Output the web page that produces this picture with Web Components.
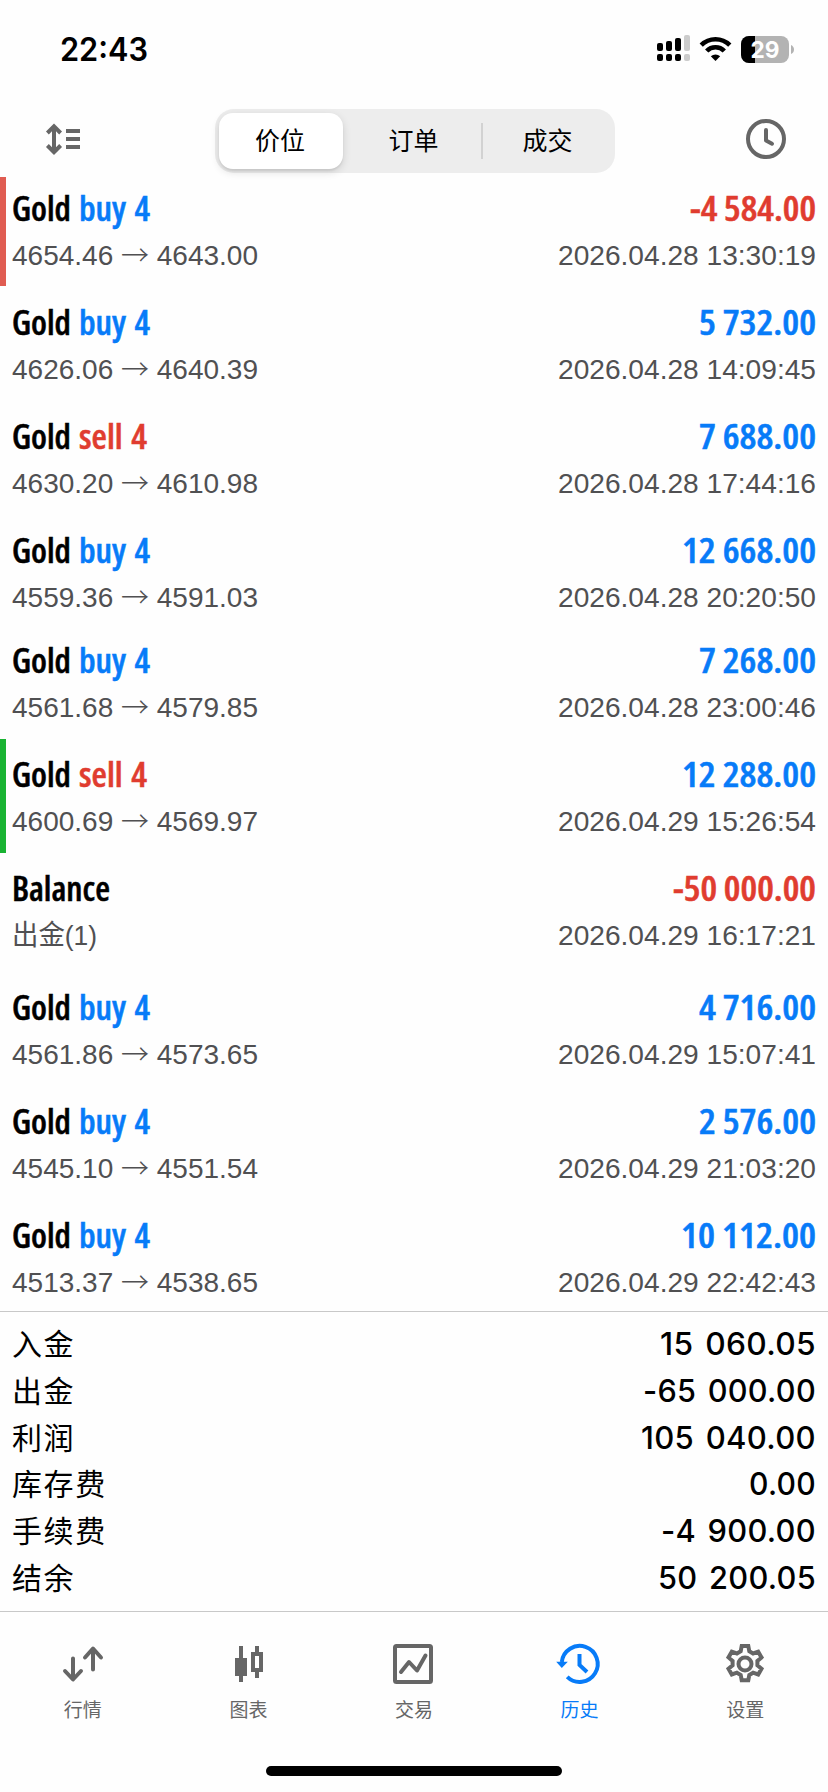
<!DOCTYPE html>
<html lang="zh-CN"><head><meta charset="utf-8"><title>历史</title>
<style>html,body{margin:0;background:#fefefe}body{width:828px;height:1792px;overflow:hidden}</style></head><body>
<history-app></history-app>
<script>
const CJK='"Noto Sans CJK SC",sans-serif';
function define(name,render,after){
  customElements.define(name,class extends HTMLElement{
    connectedCallback(){
      if(this.shadowRoot)return;
      const t=document.createElement('template');
      t.innerHTML=render(this);
      this.attachShadow({mode:'open'}).append(t.content.cloneNode(true));
      if(after)after(this);
    }
  });
}
// One line of text condensed or widened to a set width.
define('fit-text',()=>`<style>:host{display:block;flex:none;white-space:pre}span{display:inline-block;transform-origin:0 50%;white-space:pre}</style><span><slot></slot></span>`,el=>{
  const w=+el.getAttribute('w'),s=el.shadowRoot.querySelector('span');
  el.style.width=w+'px';
  s.style.transform=`scaleX(${w/s.getBoundingClientRect().width})`;
});
define('status-bar',()=>`<style>
:host{display:flex;height:100px;box-sizing:border-box;padding:0 34px 0 60px;justify-content:space-between;align-items:center}
fit-text{font:600 32px/40px Inter,sans-serif;color:#000}
svg{display:block}</style>
<fit-text w="88">22:43</fit-text>
<svg width="144" height="40" viewBox="650 30 144 40">
<g fill="#000"><rect x="657" y="43" width="6" height="8" rx="2"/><rect x="666" y="41" width="6" height="10" rx="2"/><rect x="675" y="38" width="6" height="13" rx="2"/><rect x="657" y="54" width="6" height="7" rx="2"/><rect x="666" y="54" width="6" height="7" rx="2"/><rect x="675" y="54" width="6" height="7" rx="2"/></g>
<g fill="#ccc"><rect x="684" y="35" width="6" height="16" rx="2"/><rect x="684" y="54" width="6" height="7" rx="2"/></g>
<g fill="none" stroke="#000" stroke-width="4.6"><path d="M701.2 45.2a20.3 20.3 0 0 1 28.6 0"/><path d="M706.7 51a12.2 12.2 0 0 1 17.6 0"/></g><path d="M710.8 56.2a7 7 0 0 1 9.4 0L715.500 61z"/>
<clipPath id="b"><rect x="741" y="36" width="48" height="27" rx="8"/></clipPath>
<g clip-path="url(#b)"><rect x="741" y="36" width="48" height="27" fill="#b3b3b3"/><rect x="741" y="36" width="14" height="27"/></g>
<path d="M791 45q3 1.500 3 4.500t-3 4.500z" fill="#b3b3b3"/>
<text x="765" y="58" text-anchor="middle" textLength="29" lengthAdjust="spacingAndGlyphs" font-family="Inter" font-weight="700" font-size="23" fill="#fff">29</text></svg>`);
define('segment-tabs',()=>`<style>
:host{display:grid;grid-template-columns:124px 140px 1fr;width:400px;height:64px;box-sizing:border-box;padding:4px;background:#ededed;border-radius:19px;font:400 25px/52px ${CJK};color:#000;text-align:center}
div{height:56px}.on{background:#fff;border-radius:14px;box-shadow:0 3px 8px #0002,0 2px 2px #0001;text-indent:-1px}
.l{display:flex;justify-content:center}.s{border-right:2px solid #d2d2d2;height:36px;align-self:center;line-height:32px;padding-left:4px}.f{padding-left:2px}</style>
<div class="on">价位</div><div class="l s">订单</div><div class="f l">成交</div>`);
define('tool-bar',()=>`<style>
:host{display:flex;height:77px;box-sizing:border-box;padding:9px 38px 4px 42px;justify-content:space-between;align-items:flex-start}
svg{display:block;margin-top:8px;flex:none}segment-tabs{margin-left:1px}</style>
<svg width="44" height="44" viewBox="42 117 44 44" fill="none" stroke="#666" stroke-width="4"><path d="M54 127v25M47.400 133l6.600-6.600 6.600 6.600M47.400 145.500l6.600 6.600 6.600-6.600M66 131h14M66 139h14M66 147h14"/></svg>
<segment-tabs></segment-tabs>
<svg width="48" height="44" viewBox="742 117 48 44" fill="none" stroke="#666" stroke-width="4" stroke-linecap="round" stroke-linejoin="round"><circle cx="766" cy="139" r="18"/><path d="M766 130v10.500l6 3.200"/></svg>`);
define('deal-row',el=>{
  const g=n=>el.getAttribute(n)||'',side=g('side'),amt=g('amount');
  return `<style>
:host{display:block;box-sizing:border-box;height:${g('h')||114}px;padding:${side&&g('first')?9:13}px 12px 0;position:relative}
.bar{position:absolute;left:0;top:0;width:6px;height:${g('barh')||114}px;background:${g('bar')||'none'}}
.r{display:flex;justify-content:space-between}
.n{display:flex;height:46px;font:600 33.5px/45px "Open Sans",sans-serif;font-stretch:75%;color:#000;-webkit-text-stroke:.5px currentColor}
.buy,.sell{word-spacing:2px}.buy{color:#077bf8}.sell{color:#e03c2f}
.a{color:${amt[0]=='-'?'#e03c2f':'#077bf8'}}
.d{font:400 28px/48px "Liberation Sans","Noto Sans CJK SC",sans-serif;color:#505052;height:48px}
.p{white-space:pre}.ar{display:inline-block;width:28px;text-align:center;font-family:${CJK};font-weight:300;line-height:30px;position:relative;top:1px}
.left{display:flex;gap:8px}</style>
<div class="bar"></div>
<div class="r n"><div class="left">${side?`<fit-text w="59">Gold</fit-text><fit-text class="${side}" w="${side=='buy'?71:68}">${side} 4</fit-text>`:`<fit-text w="98">Balance</fit-text>`}</div><fit-text class="a" w="${g('w')}">${amt}</fit-text></div>
<div class="r d"><span class="p">${side?`${g('from')} <span class="ar">→</span> ${g('to')}`:'<fit-text w="85">出金(1)</fit-text>'}</span><fit-text w="258">${g('time')}</fit-text></div>`;
});
define('sum-row',el=>`<style>:host{display:flex;height:46.8px;justify-content:space-between;padding:0 12px;color:#000;font:400 30px/46.8px ${CJK};letter-spacing:1.600px}
span{margin-top:-2px}fit-text{font:450 31px/46.8px Inter,sans-serif;letter-spacing:.3px;word-spacing:3px}</style><span>${el.getAttribute('label')}</span><fit-text w="${el.getAttribute('w')}">${el.getAttribute('value')}</fit-text>`);
const icons={
quotes:'<g fill="none" stroke="currentColor" stroke-width="4" stroke-linecap="round" stroke-linejoin="round"><path d="M12 16.500V37M4 29l8 8.500 8-8.500M32 27.500V7M24 15.500L32 6.500l8 9"/></g>',
chart:'<path fill="currentColor" fill-rule="evenodd" d="M13 4h4v12h4v18h-4v6h-4v-6H9V16h4zM29 4h4v6h4v20h-4v6h-4v-6h-4V10h4zM29 14v12h4V14z"/>',
trade:'<g fill="none" stroke="currentColor" stroke-width="4" stroke-linejoin="round" stroke-linecap="round"><rect x="3" y="4" width="36" height="36" rx="1.500"/><path d="M9 30l8-10 8 8.500 8.500-15"/></g>',
history:'<path fill="none" stroke="currentColor" stroke-width="4" d="M3.800 20A18 18 0 1 1 9.200 34.900M21.500 12v11l7.500 7"/><path fill="currentColor" d="M-1.800 19.800h11.600l-6 6.200z"/>',
settings:'<g fill="none" stroke="currentColor" stroke-width="4" stroke-linejoin="miter"><circle cx="22" cy="22" r="6.500"/><path d="M18.700 4h6.600l1 5.300 3.800 2.200 5.100-1.800 3.300 5.700-4.100 3.500v4.400l4.100 3.500-3.300 5.700-5.100-1.800-3.800 2.200-1 5.300h-6.600l-1-5.300-3.800-2.200-5.100 1.800-3.300-5.700 4.100-3.500v-4.400l-4.100-3.500 3.300-5.700 5.100 1.800 3.800-2.200z"/></g>'};
define('tab-item',el=>`<style>:host{display:flex;flex-direction:column;align-items:center;color:${el.hasAttribute('on')?'#077bf8':'#666'};font:400 19px/28px ${CJK}}svg{display:block;overflow:visible;margin-bottom:9px}</style><svg width="44" height="44">${icons[el.getAttribute('icon')]}</svg><span><slot></slot></span>`);
define('tab-bar',()=>`<style>:host{display:grid;grid-template-columns:repeat(5,1fr);height:155px;box-sizing:border-box;padding-top:30px;border-top:1px solid #c8c8c8}</style>
<tab-item icon="quotes">行情</tab-item><tab-item icon="chart">图表</tab-item><tab-item icon="trade">交易</tab-item><tab-item icon="history" on>历史</tab-item><tab-item icon="settings">设置</tab-item>`);
const deals=[
['buy','4654.46','4643.00','-4 584.00',126,'2026.04.28 13:30:19','h="110" first="1" bar="#e05c52" barh="109"'],
['buy','4626.06','4640.39','5 732.00',117,'2026.04.28 14:09:45',''],
['sell','4630.20','4610.98','7 688.00',117,'2026.04.28 17:44:16',''],
['buy','4559.36','4591.03','12 668.00',134,'2026.04.28 20:20:50','h="110"'],
['buy','4561.68','4579.85','7 268.00',117,'2026.04.28 23:00:46',''],
['sell','4600.69','4569.97','12 288.00',134,'2026.04.29 15:26:54','bar="#19b332"'],
['','','','-50 000.00',143,'2026.04.29 16:17:21','h="119"'],
['buy','4561.86','4573.65','4 716.00',117,'2026.04.29 15:07:41',''],
['buy','4545.10','4551.54','2 576.00',117,'2026.04.29 21:03:20',''],
['buy','4513.37','4538.65','10 112.00',135,'2026.04.29 22:42:43','h="111"']];
define('history-app',()=>`<style>:host{display:flex;flex-direction:column;width:828px;height:1792px;background:#fefefe}
.sum{border-top:1px solid #c8c8c8;height:300px;box-sizing:border-box;padding-top:9px}
.home{width:296px;height:10px;border-radius:5px;background:#000;margin:0 auto}</style>
<status-bar></status-bar><tool-bar></tool-bar>
<main>${deals.map(d=>`<deal-row side="${d[0]}" from="${d[1]}" to="${d[2]}" amount="${d[3]}" w="${d[4]}" time="${d[5]}" ${d[6]}></deal-row>`).join('')}</main>
<div class="sum">${[['入金','15 060.05',156],['出金','-65 000.00',173],['利润','105 040.00',175],['库存费','0.00',67],['手续费','-4 900.00',155],['结余','50 200.05',158]].map(r=>`<sum-row label="${r[0]}" value="${r[1]}" w="${r[2]}"></sum-row>`).join('')}</div>
<tab-bar></tab-bar><div class="home"></div>`);
</script></body></html>
